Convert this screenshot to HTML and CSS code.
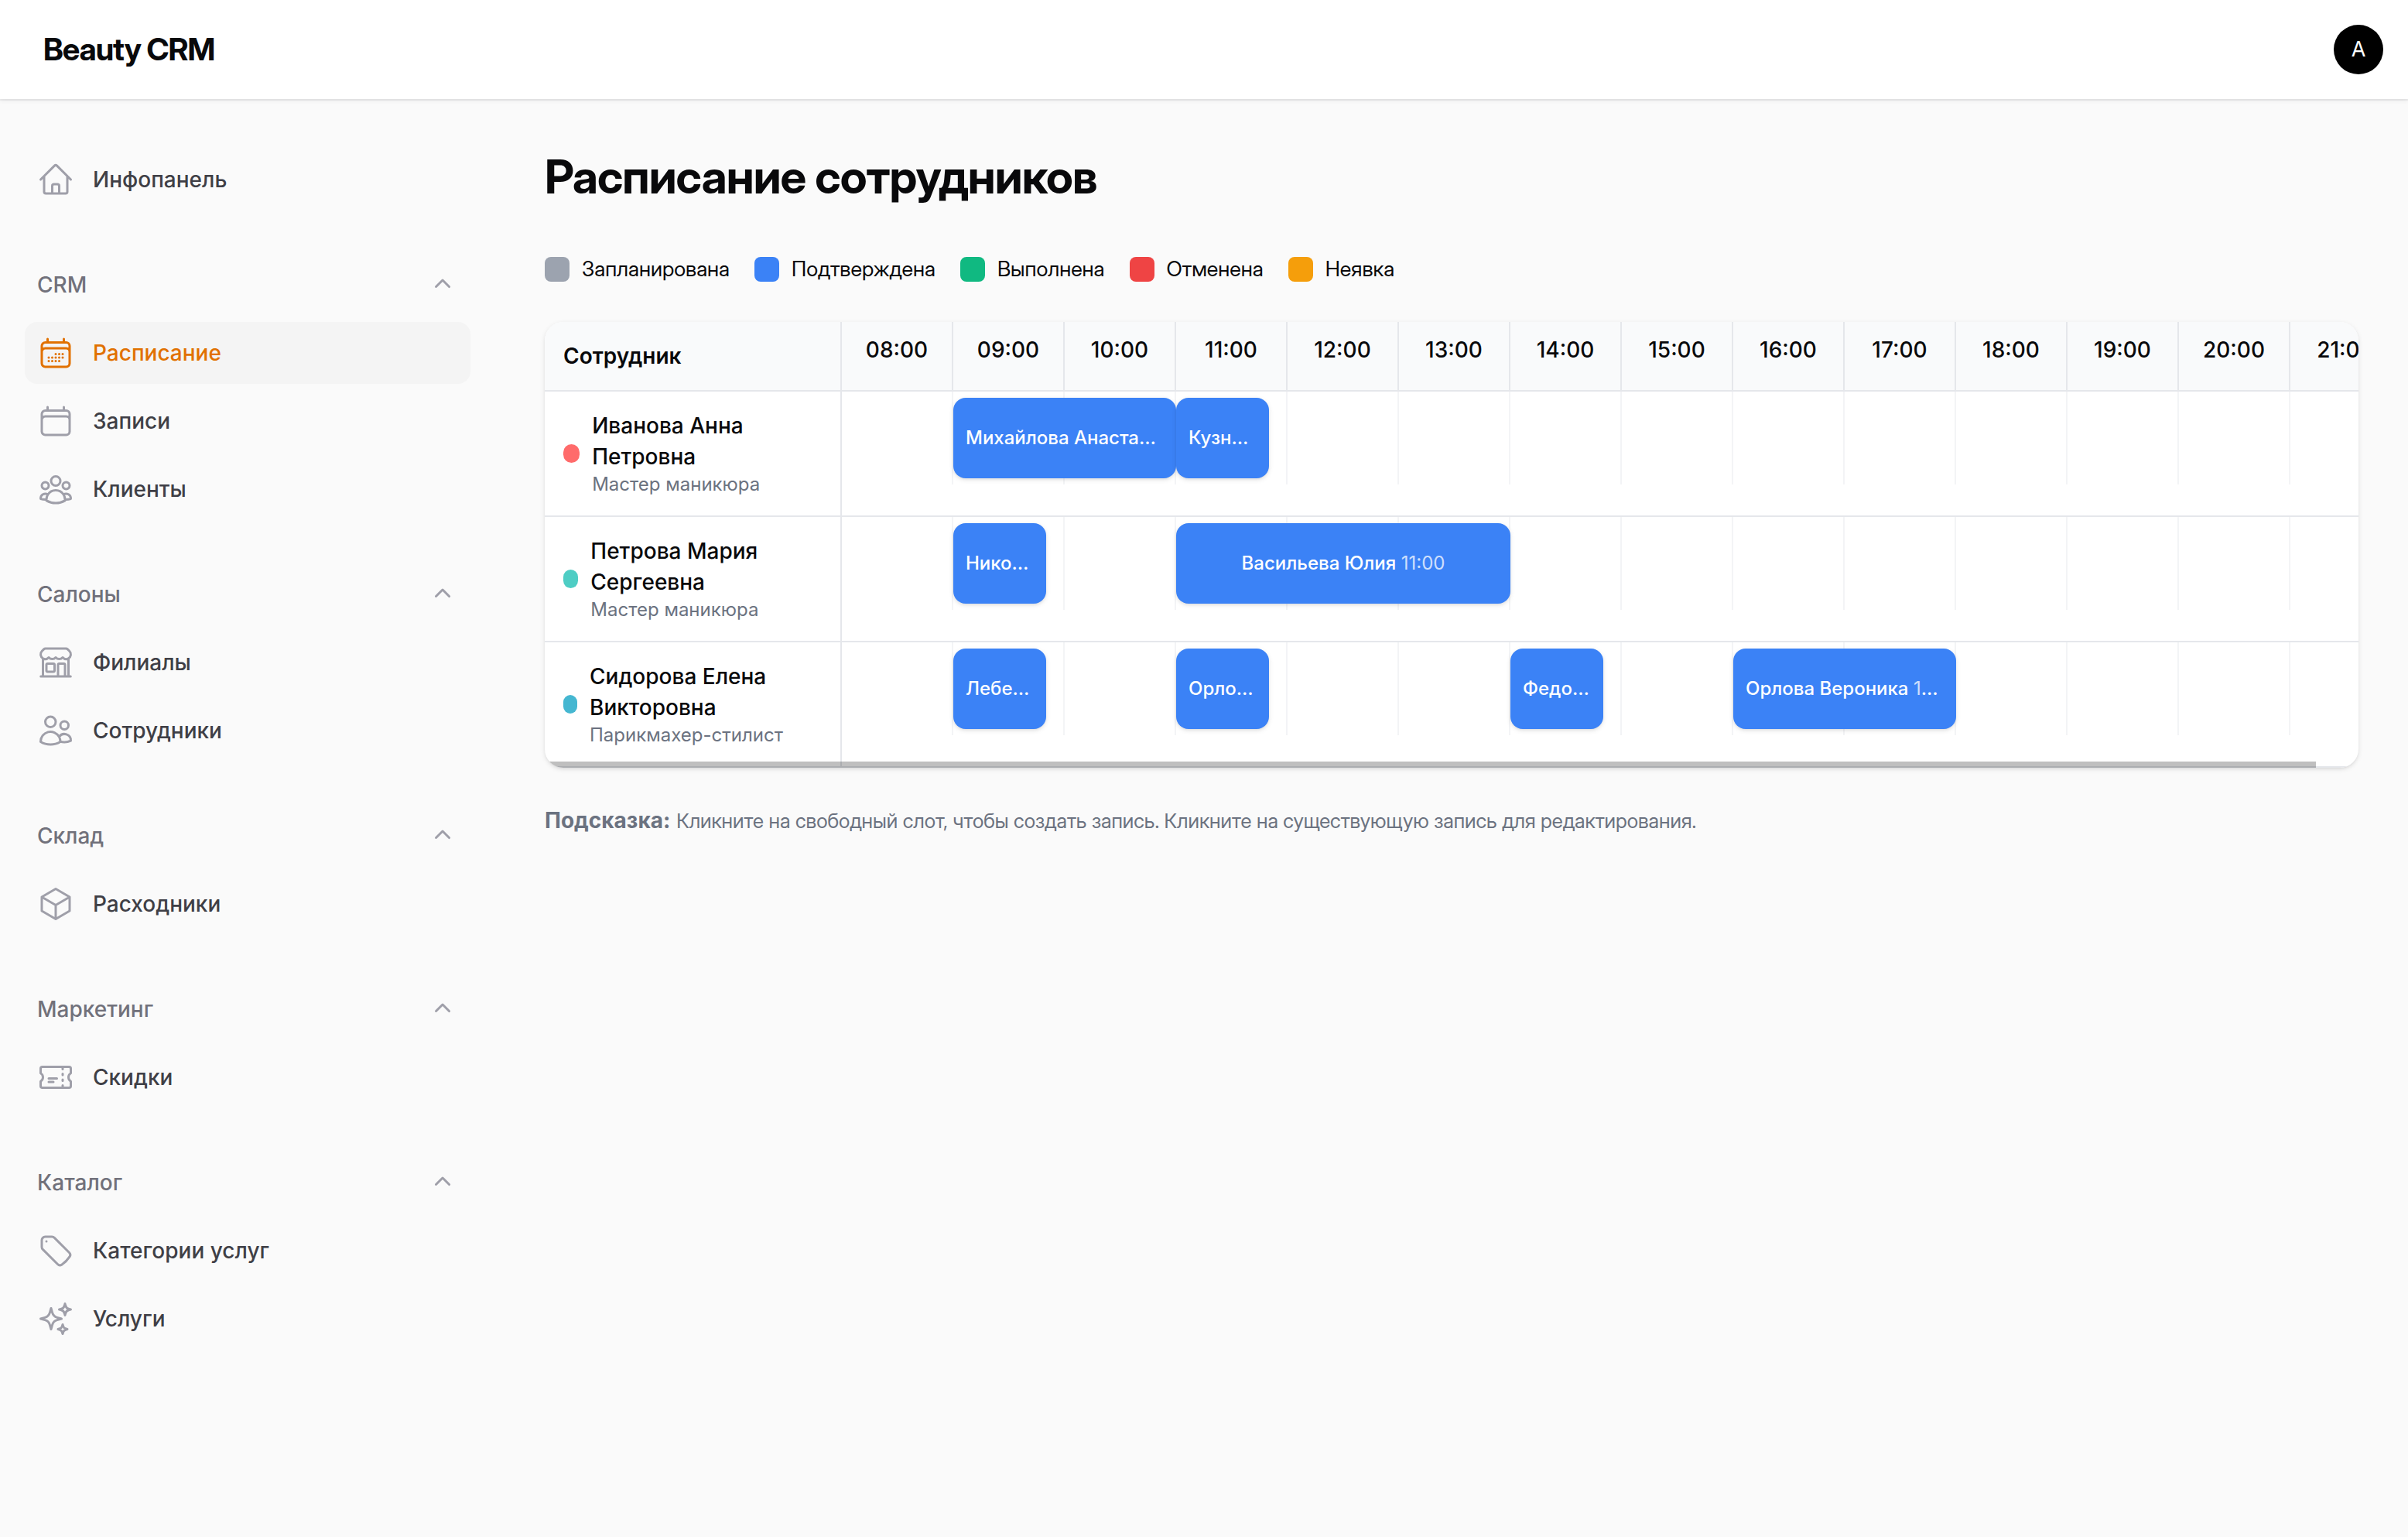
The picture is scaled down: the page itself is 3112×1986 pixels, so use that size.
FILE: index.html
```html
<!DOCTYPE html>
<html lang="ru">
<head>
<meta charset="utf-8">
<meta name="viewport" content="width=device-width, initial-scale=1">
<title>Расписание сотрудников - Beauty CRM</title>
<link rel="stylesheet" href="styles.css">
</head>
<body>
<header class="topbar">
  <a class="brand" href="#">Beauty CRM</a>
  <button class="avatar" type="button" aria-label="Меню пользователя">A</button>
</header>
<div class="layout">
  <nav class="sidebar" aria-label="Основная навигация">
    <ul class="nav-list">
      <li><a class="nav-item" href="#"><svg class="nav-icon" viewBox="0 0 24 24"><path d="m2.25 12 8.954-8.955c.44-.439 1.152-.439 1.591 0L21.75 12M4.5 9.75v10.125c0 .621.504 1.125 1.125 1.125H9.75v-4.875c0-.621.504-1.125 1.125-1.125h2.25c.621 0 1.125.504 1.125 1.125V21h4.125c.621 0 1.125-.504 1.125-1.125V9.75M8.25 21h8.25"/></svg>Инфопанель</a></li>
    </ul>
    <section class="nav-group">
      <button class="group-toggle" type="button" aria-expanded="true">CRM<svg class="chevron" viewBox="0 0 20 20"><path d="M9.47 6.47a.75.75 0 0 1 1.06 0l4.25 4.25a.75.75 0 1 1-1.06 1.06L10 8.06l-3.72 3.72a.75.75 0 0 1-1.06-1.06l4.25-4.25Z"/></svg></button>
      <ul class="nav-list">
        <li><a class="nav-item active" href="#" aria-current="page"><svg class="nav-icon" viewBox="0 0 24 24"><path d="M6.75 3v2.25M17.25 3v2.25M3 18.75V7.5a2.25 2.25 0 0 1 2.25-2.25h13.5A2.25 2.25 0 0 1 21 7.5v11.25m-18 0A2.25 2.25 0 0 0 5.25 21h13.5A2.25 2.25 0 0 0 21 18.75m-18 0v-7.5A2.25 2.25 0 0 1 5.25 9h13.5A2.25 2.25 0 0 1 21 11.25v7.5m-9-6h.008v.008H12v-.008ZM12 15h.008v.008H12V15Zm0 2.25h.008v.008H12v-.008ZM9.75 15h.008v.008H9.75V15Zm0 2.25h.008v.008H9.75v-.008ZM7.5 15h.008v.008H7.5V15Zm0 2.25h.008v.008H7.5v-.008Zm6.75-4.5h.008v.008h-.008v-.008Zm0 2.25h.008v.008h-.008V15Zm0 2.25h.008v.008h-.008v-.008Zm2.25-4.5h.008v.008H16.5v-.008Zm0 2.25h.008v.008H16.5V15Z"/></svg>Расписание</a></li>
        <li><a class="nav-item" href="#"><svg class="nav-icon" viewBox="0 0 24 24"><path d="M6.75 3v2.25M17.25 3v2.25M3 18.75V7.5a2.25 2.25 0 0 1 2.25-2.25h13.5A2.25 2.25 0 0 1 21 7.5v11.25m-18 0A2.25 2.25 0 0 0 5.25 21h13.5A2.25 2.25 0 0 0 21 18.75m-18 0v-7.5A2.25 2.25 0 0 1 5.25 9h13.5A2.25 2.25 0 0 1 21 11.25v7.5"/></svg>Записи</a></li>
        <li><a class="nav-item" href="#"><svg class="nav-icon" viewBox="0 0 24 24"><path d="M18 18.72a9.094 9.094 0 0 0 3.741-.479 3 3 0 0 0-4.682-2.72m.94 3.198.001.031c0 .225-.012.447-.037.666A11.944 11.944 0 0 1 12 21c-2.17 0-4.207-.576-5.963-1.584A6.062 6.062 0 0 1 6 18.719m12 0a5.971 5.971 0 0 0-.941-3.197m0 0A5.995 5.995 0 0 0 12 12.75a5.995 5.995 0 0 0-5.058 2.772m0 0a3 3 0 0 0-4.681 2.72 8.986 8.986 0 0 0 3.74.477m.94-3.197a5.971 5.971 0 0 0-.94 3.197M15 6.75a3 3 0 1 1-6 0 3 3 0 0 1 6 0Zm6 3a2.25 2.25 0 1 1-4.5 0 2.25 2.25 0 0 1 4.5 0Zm-13.5 0a2.25 2.25 0 1 1-4.5 0 2.25 2.25 0 0 1 4.5 0Z"/></svg>Клиенты</a></li>
      </ul>
    </section>
    <section class="nav-group">
      <button class="group-toggle" type="button" aria-expanded="true">Салоны<svg class="chevron" viewBox="0 0 20 20"><path d="M9.47 6.47a.75.75 0 0 1 1.06 0l4.25 4.25a.75.75 0 1 1-1.06 1.06L10 8.06l-3.72 3.72a.75.75 0 0 1-1.06-1.06l4.25-4.25Z"/></svg></button>
      <ul class="nav-list">
        <li><a class="nav-item" href="#"><svg class="nav-icon" viewBox="0 0 24 24"><path d="M13.5 21v-7.5a.75.75 0 0 1 .75-.75h3a.75.75 0 0 1 .75.75V21m-4.5 0H2.36m11.14 0H18m0 0h3.64m-1.39 0V9.349M3.75 21V9.349m0 0a3.001 3.001 0 0 0 3.75-.615A2.993 2.993 0 0 0 9.75 9.75c.896 0 1.7-.393 2.25-1.016a2.993 2.993 0 0 0 2.25 1.016c.896 0 1.7-.393 2.25-1.015a3.001 3.001 0 0 0 3.75.614m-16.5 0a3.004 3.004 0 0 1-.621-4.72l1.189-1.19A1.5 1.5 0 0 1 5.378 3h13.243a1.5 1.5 0 0 1 1.06.44l1.19 1.189a3 3 0 0 1-.621 4.72M6.75 18h3.75a.75.75 0 0 0 .75-.75V13.5a.75.75 0 0 0-.75-.75H6.75a.75.75 0 0 0-.75.75v3.75c0 .414.336.75.75.75Z"/></svg>Филиалы</a></li>
        <li><a class="nav-item" href="#"><svg class="nav-icon" viewBox="0 0 24 24"><path d="M15 19.128a9.38 9.38 0 0 0 2.625.372 9.337 9.337 0 0 0 4.121-.952 4.125 4.125 0 0 0-7.533-2.493M15 19.128v-.003c0-1.113-.285-2.16-.786-3.07M15 19.128v.106A12.318 12.318 0 0 1 8.624 21c-2.331 0-4.512-.645-6.374-1.766l-.001-.109a6.375 6.375 0 0 1 11.964-3.07M12 6.375a3.375 3.375 0 1 1-6.75 0 3.375 3.375 0 0 1 6.75 0Zm8.25 2.25a2.625 2.625 0 1 1-5.25 0 2.625 2.625 0 0 1 5.25 0Z"/></svg>Сотрудники</a></li>
      </ul>
    </section>
    <section class="nav-group">
      <button class="group-toggle" type="button" aria-expanded="true">Склад<svg class="chevron" viewBox="0 0 20 20"><path d="M9.47 6.47a.75.75 0 0 1 1.06 0l4.25 4.25a.75.75 0 1 1-1.06 1.06L10 8.06l-3.72 3.72a.75.75 0 0 1-1.06-1.06l4.25-4.25Z"/></svg></button>
      <ul class="nav-list">
        <li><a class="nav-item" href="#"><svg class="nav-icon" viewBox="0 0 24 24"><path d="m21 7.5-9-5.25L3 7.5m18 0-9 5.25m9-5.25v9l-9 5.25M3 7.5l9 5.25M3 7.5v9l9 5.25m0-9v9"/></svg>Расходники</a></li>
      </ul>
    </section>
    <section class="nav-group">
      <button class="group-toggle" type="button" aria-expanded="true">Маркетинг<svg class="chevron" viewBox="0 0 20 20"><path d="M9.47 6.47a.75.75 0 0 1 1.06 0l4.25 4.25a.75.75 0 1 1-1.06 1.06L10 8.06l-3.72 3.72a.75.75 0 0 1-1.06-1.06l4.25-4.25Z"/></svg></button>
      <ul class="nav-list">
        <li><a class="nav-item" href="#"><svg class="nav-icon" viewBox="0 0 24 24"><path d="M16.5 6v.75m0 3v.75m0 3v.75m0 3V18m-9-5.25h5.25M7.5 15h3M3.375 5.25c-.621 0-1.125.504-1.125 1.125v3.026a2.999 2.999 0 0 1 0 5.198v3.026c0 .621.504 1.125 1.125 1.125h17.25c.621 0 1.125-.504 1.125-1.125v-3.026a2.999 2.999 0 0 1 0-5.198V6.375c0-.621-.504-1.125-1.125-1.125H3.375Z"/></svg>Скидки</a></li>
      </ul>
    </section>
    <section class="nav-group">
      <button class="group-toggle" type="button" aria-expanded="true">Каталог<svg class="chevron" viewBox="0 0 20 20"><path d="M9.47 6.47a.75.75 0 0 1 1.06 0l4.25 4.25a.75.75 0 1 1-1.06 1.06L10 8.06l-3.72 3.72a.75.75 0 0 1-1.06-1.06l4.25-4.25Z"/></svg></button>
      <ul class="nav-list">
        <li><a class="nav-item" href="#"><svg class="nav-icon" viewBox="0 0 24 24"><path d="M9.568 3H5.25A2.25 2.25 0 0 0 3 5.25v4.318c0 .597.237 1.17.659 1.591l9.581 9.581c.699.699 1.78.872 2.607.33a18.095 18.095 0 0 0 5.223-5.223c.542-.827.369-1.908-.33-2.607L11.16 3.66A2.25 2.25 0 0 0 9.568 3Z"/><path d="M6 6h.008v.008H6V6Z"/></svg>Категории услуг</a></li>
        <li><a class="nav-item" href="#"><svg class="nav-icon" viewBox="0 0 24 24"><path d="M9.813 15.904 9 18.75l-.813-2.846a4.5 4.5 0 0 0-3.09-3.09L2.25 12l2.846-.813a4.5 4.5 0 0 0 3.09-3.09L9 5.25l.813 2.846a4.5 4.5 0 0 0 3.09 3.09L15.75 12l-2.846.813a4.5 4.5 0 0 0-3.09 3.09ZM18.259 8.715 18 9.75l-.259-1.035a3.375 3.375 0 0 0-2.455-2.456L14.25 6l1.036-.259a3.375 3.375 0 0 0 2.455-2.456L18 2.25l.259 1.035a3.375 3.375 0 0 0 2.456 2.456L21.75 6l-1.035.259a3.375 3.375 0 0 0-2.456 2.456ZM16.894 20.567 16.5 21.75l-.394-1.183a2.25 2.25 0 0 0-1.423-1.423L13.5 18.75l1.183-.394a2.25 2.25 0 0 0 1.423-1.423l.394-1.183.394 1.183a2.25 2.25 0 0 0 1.423 1.423l1.183.394-1.183.394a2.25 2.25 0 0 0-1.423 1.423Z"/></svg>Услуги</a></li>
      </ul>
    </section>
  </nav>
  <main class="content">
    <h1 class="page-title">Расписание сотрудников</h1>
    <ul class="legend">
      <li class="legend-item"><span class="swatch planned"></span>Запланирована</li>
      <li class="legend-item"><span class="swatch confirmed"></span>Подтверждена</li>
      <li class="legend-item"><span class="swatch done"></span>Выполнена</li>
      <li class="legend-item"><span class="swatch cancelled"></span>Отменена</li>
      <li class="legend-item"><span class="swatch no-show"></span>Неявка</li>
    </ul>
    <div class="schedule-card">
      <table class="schedule">
        <thead>
          <tr>
            <th class="staff-head" scope="col">Сотрудник</th>
            <th class="hour" scope="col">08:00</th><th class="hour" scope="col">09:00</th><th class="hour" scope="col">10:00</th><th class="hour" scope="col">11:00</th><th class="hour" scope="col">12:00</th><th class="hour" scope="col">13:00</th><th class="hour" scope="col">14:00</th><th class="hour" scope="col">15:00</th><th class="hour" scope="col">16:00</th><th class="hour" scope="col">17:00</th><th class="hour" scope="col">18:00</th><th class="hour" scope="col">19:00</th><th class="hour" scope="col">20:00</th><th class="hour" scope="col">21:00</th>
          </tr>
        </thead>
        <tbody>
          <tr>
            <th class="staff" scope="row"><div class="person"><span class="dot coral"></span><div><div class="name">Иванова Анна Петровна</div><div class="role">Мастер маникюра</div></div></div></th>
            <td><div class="slot"></div></td>
            <td><div class="slot"><button class="event" type="button" style="width: 200%"><span class="event-text">Михайлова Анастасия <span class="event-time">09:00</span></span></button></div></td>
            <td><div class="slot"></div></td>
            <td><div class="slot"><button class="event" type="button" style="width: 83.333%"><span class="event-text">Кузнецова Ольга <span class="event-time">11:00</span></span></button></div></td>
            <td><div class="slot"></div></td><td><div class="slot"></div></td><td><div class="slot"></div></td><td><div class="slot"></div></td><td><div class="slot"></div></td><td><div class="slot"></div></td><td><div class="slot"></div></td><td><div class="slot"></div></td><td><div class="slot"></div></td><td><div class="slot"></div></td>
          </tr>
          <tr>
            <th class="staff" scope="row"><div class="person"><span class="dot teal"></span><div><div class="name">Петрова Мария Сергеевна</div><div class="role">Мастер маникюра</div></div></div></th>
            <td><div class="slot"></div></td>
            <td><div class="slot"><button class="event" type="button" style="width: 83.333%"><span class="event-text">Николаева Дарья <span class="event-time">09:00</span></span></button></div></td>
            <td><div class="slot"></div></td>
            <td><div class="slot"><button class="event" type="button" style="width: 300%"><span class="event-text">Васильева Юлия <span class="event-time">11:00</span></span></button></div></td>
            <td><div class="slot"></div></td><td><div class="slot"></div></td><td><div class="slot"></div></td><td><div class="slot"></div></td><td><div class="slot"></div></td><td><div class="slot"></div></td><td><div class="slot"></div></td><td><div class="slot"></div></td><td><div class="slot"></div></td><td><div class="slot"></div></td>
          </tr>
          <tr>
            <th class="staff" scope="row"><div class="person"><span class="dot sky"></span><div><div class="name">Сидорова Елена Викторовна</div><div class="role">Парикмахер-стилист</div></div></div></th>
            <td><div class="slot"></div></td>
            <td><div class="slot"><button class="event" type="button" style="width: 83.333%"><span class="event-text">Лебедева Ирина <span class="event-time">09:00</span></span></button></div></td>
            <td><div class="slot"></div></td>
            <td><div class="slot"><button class="event" type="button" style="width: 83.333%"><span class="event-text">Орлова Вероника <span class="event-time">11:00</span></span></button></div></td>
            <td><div class="slot"></div></td><td><div class="slot"></div></td>
            <td><div class="slot"><button class="event" type="button" style="width: 83.333%"><span class="event-text">Федорова Алина <span class="event-time">14:00</span></span></button></div></td>
            <td><div class="slot"></div></td>
            <td><div class="slot"><button class="event" type="button" style="width: 200%"><span class="event-text">Орлова Вероника <span class="event-time">16:00</span></span></button></div></td>
            <td><div class="slot"></div></td><td><div class="slot"></div></td><td><div class="slot"></div></td><td><div class="slot"></div></td><td><div class="slot"></div></td>
          </tr>
        </tbody>
      </table>
      <div class="scroll-thumb"></div>
    </div>
    <p class="hint"><strong>Подсказка:</strong> <span class="hint-text">Кликните на свободный слот, чтобы создать запись. Кликните на существующую запись для редактирования.</span></p>
  </main>
</div>
</body>
</html>
```
FILE: styles.css
```css
* {
  box-sizing: border-box;
}

body {
  margin: 0;
  min-height: 100vh;
  background: #fafafa;
  color: #09090b;
  font-family: Inter, "Liberation Sans", sans-serif;
  font-size: 28px;
  line-height: 40px;
  -webkit-font-smoothing: antialiased;
}

button {
  margin: 0;
  border: 0;
  background: none;
  font: inherit;
  cursor: pointer;
}

a {
  color: inherit;
  text-decoration: none;
}

ul {
  margin: 0;
  padding: 0;
  list-style: none;
}

/* Display cut of the typeface for headings and running text */
.brand,
.page-title,
.legend,
.hint-text {
  font-family: "Inter Display", Inter, "Liberation Sans", sans-serif;
}

/* Top bar */
.topbar {
  position: relative;
  display: flex;
  align-items: center;
  justify-content: space-between;
  height: 128px;
  padding: 0 32px 0 56px;
  background: #fff;
  box-shadow: 0 0 0 2px rgb(9 9 11 / 5%), 0 2px 6px rgb(0 0 0 / 7%);
}

.brand {
  font-size: 40px;
  font-weight: 700;
  letter-spacing: -0.025em;
}

.avatar {
  width: 64px;
  height: 64px;
  padding: 0;
  border-radius: 50%;
  background: #000;
  color: #fff;
  font-size: 27px;
}

/* Sidebar */
.layout {
  display: flex;
}

.sidebar {
  display: flex;
  flex: none;
  flex-direction: column;
  gap: 56px;
  width: 640px;
  padding: 64px 32px;
  font-weight: 500;
}

.nav-group,
.nav-list {
  display: flex;
  flex-direction: column;
  gap: 8px;
}

.nav-item,
.group-toggle {
  display: flex;
  align-items: center;
  width: 100%;
  height: 80px;
  padding: 0 16px;
  border-radius: 16px;
}

.nav-item {
  gap: 24px;
  color: #3f3f46;
}

.nav-item.active {
  background: #f4f4f4;
  color: #e17100;
}

.nav-icon {
  flex: none;
  width: 48px;
  height: 48px;
  fill: none;
  stroke: #9f9fa9;
  stroke-width: 1.5;
  stroke-linecap: round;
  stroke-linejoin: round;
}

.active .nav-icon {
  stroke: #e17100;
}

.group-toggle {
  justify-content: space-between;
  color: #71717b;
}

.chevron {
  width: 40px;
  height: 40px;
  fill: #9f9fa9;
}

/* Page content */
.content {
  flex: 1;
  min-width: 0;
  padding: 64px;
}

.page-title {
  margin: 0 0 64px;
  font-size: 60px;
  font-weight: 700;
  line-height: 72px;
  letter-spacing: -0.015em;
}

.legend {
  display: flex;
  flex-wrap: wrap;
  gap: 32px;
  margin-bottom: 48px;
  font-size: 27px;
}

.legend-item {
  display: flex;
  align-items: center;
  gap: 16px;
}

.swatch {
  width: 32px;
  height: 32px;
  border-radius: 8px;
}

.planned { background: #9ca3af; }
.confirmed { background: #3b82f6; }
.done { background: #10b981; }
.cancelled { background: #ef4444; }
.no-show { background: #f59e0b; }

/* Schedule grid */
.schedule-card {
  position: relative;
  overflow: hidden;
  border-radius: 24px;
  background: #fff;
  box-shadow: 0 2px 6px rgb(0 0 0 / 10%), 0 2px 4px -2px rgb(0 0 0 / 10%);
}

.schedule {
  width: 2400px;
  table-layout: fixed;
  border-collapse: separate;
  border-spacing: 0;
}

.schedule th,
.schedule td {
  padding: 0;
  border-bottom: 2px solid #e5e7eb;
  text-align: left;
  vertical-align: top;
}

.schedule .staff-head,
.schedule .staff {
  width: 384px;
  padding: 24px;
  border-right: 2px solid #e5e7eb;
}

.schedule .staff-head {
  background: #f9fafb;
  font-weight: 600;
}

.schedule .hour {
  width: 144px;
  padding: 16px 0;
  border-right: 2px solid #e5e7eb;
  background: #f9fafb;
  font-weight: 500;
  text-align: center;
}

.person {
  display: flex;
  align-items: center;
  gap: 16px;
}

.dot {
  width: 24px;
  height: 24px;
  border-radius: 12px;
}

.coral { background: #ff6b6b; }
.teal { background: #4ecdc4; }
.sky { background: #45b7d1; }

.name {
  font-weight: 500;
}

.role {
  color: #6b7280;
  font-size: 24px;
  font-weight: 400;
  line-height: 32px;
}

.slot {
  position: relative;
  height: 120px;
  box-shadow: inset -2px 0 #f3f4f6;
}

.event {
  position: absolute;
  z-index: 1;
  top: 8px;
  left: 0;
  height: 104px;
  padding: 0 16px;
  border-radius: 16px;
  background: #3b82f6;
  box-shadow: 0 2px 6px rgb(0 0 0 / 10%), 0 2px 4px -2px rgb(0 0 0 / 10%);
  color: #fff;
  font-size: 24px;
  font-weight: 500;
  line-height: 32px;
}

.event-text {
  display: block;
  overflow: hidden;
  text-overflow: ellipsis;
  white-space: nowrap;
}

.event-time {
  font-weight: 400;
  opacity: 0.75;
}

.scroll-thumb {
  position: absolute;
  z-index: 2;
  bottom: 0;
  left: 0;
  width: calc(100% * 2344 / 2400);
  height: 8px;
  background: rgb(0 0 0 / 25%);
}

.hint {
  margin: 48px 0 0;
  color: #6b7280;
}

.hint-text {
  font-size: 26px;
}
```
